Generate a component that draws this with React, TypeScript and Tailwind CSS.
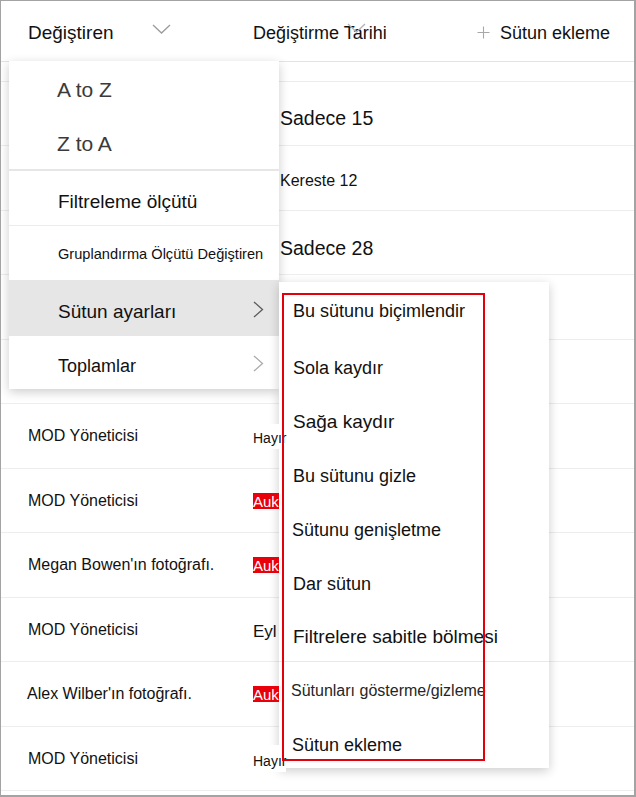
import React from "react";

type Row = {
  h: string;
  name?: string;
  namePad?: string;
  val?: React.ReactNode;
};

function Auk() {
  return (
    <span className="relative z-20 inline-block w-[26px] overflow-hidden whitespace-nowrap bg-[#e8000b] pt-[1px] text-[15px] leading-[15px] text-white">
      Auk
    </span>
  );
}

const rows: Row[] = [
  {
    h: "h-[64px]",
    val: <span className="bg-white pl-[27px] pt-[10px] text-[19.5px]">Sadece 15</span>,
  },
  {
    h: "h-[65px]",
    val: <span className="bg-white pl-[27px] pt-[5px] text-[16px]">Kereste 12</span>,
  },
  {
    h: "h-[64px]",
    val: <span className="bg-white pl-[27px] pt-[12px] text-[19.5px]">Sadece 28</span>,
  },
  { h: "h-[65px]" },
  { h: "h-[64px]" },
  {
    h: "h-[65px]",
    name: "MOD Yöneticisi",
    val: <span className="relative z-20 bg-white pt-[4px] text-[14px]">Hayır</span>,
  },
  { h: "h-[64px]", name: "MOD Yöneticisi", val: <Auk /> },
  { h: "h-[65px]", name: "Megan Bowen'ın fotoğrafı.", val: <Auk /> },
  {
    h: "h-[64px]",
    name: "MOD Yöneticisi",
    val: <span className="w-[26px] bg-white pt-[4px] text-[17px]">Eyl</span>,
  },
  { h: "h-[65px]", name: "Alex Wilber'ın fotoğrafı.", namePad: "pl-[26px]", val: <Auk /> },
  {
    h: "h-[64px]",
    name: "MOD Yöneticisi",
    val: <span className="relative z-20 bg-white pt-[6px] text-[14px]">Hayır</span>,
  },
];

function ChevronDown({ className, color }: { className?: string; color: string }) {
  return (
    <svg className={className} width="19" height="10" viewBox="0 0 19 10" fill="none">
      <polyline points="1,1 9.5,9 18,1" stroke={color} strokeWidth="1.3" />
    </svg>
  );
}

function ChevronRight({ color }: { color: string }) {
  return (
    <svg width="11" height="17" viewBox="0 0 11 17" fill="none">
      <polyline points="1,1 9.5,8.5 1,16" stroke={color} strokeWidth="1.3" />
    </svg>
  );
}

function SortMenu() {
  return (
    <div className="absolute left-[8px] top-[60px] z-10 w-[270px] bg-white shadow-[0_3px_10px_rgba(0,0,0,0.2)]">
      <div className="flex h-[54px] items-center pl-[48px] pt-[4px] text-[21px] text-[#3a3a3a]">A to Z</div>
      <div className="flex h-[54px] items-center pl-[48px] pt-[4px] text-[21px] text-[#3a3a3a]">Z to A</div>
      <div className="h-[2px] bg-[#e6e6e6]" />
      <div className="flex h-[54px] items-center pl-[49px] pt-[8px] text-[19px]">Filtreleme ölçütü</div>
      <div className="h-px bg-[#ececec]" />
      <div className="flex h-[54px] items-center pl-[49px] pt-[3px] text-[14.6px]">
        Gruplandırma Ölçütü Değiştiren
      </div>
      <div className="flex h-[56px] items-center justify-between bg-[#e6e6e6] pl-[49px] pr-[15px] pt-[8px] text-[19px]">
        <span>Sütun ayarları</span>
        <span className="mb-[6px] flex">
          <ChevronRight color="#5a5a5a" />
        </span>
      </div>
      <div className="flex h-[53px] items-center justify-between pl-[49px] pr-[15px] pt-[8px] text-[18px]">
        <span>Toplamlar</span>
        <span className="mb-[6px] flex">
          <ChevronRight color="#ababab" />
        </span>
      </div>
    </div>
  );
}

const subItems: { h: string; size: string; pad: string; label: string }[] = [
  { h: "h-[56px]", size: "text-[18px]", pad: "pl-[14px] pt-[2px]", label: "Bu sütunu biçimlendir" },
  { h: "h-[57px]", size: "text-[18px]", pad: "pl-[14px] pt-[4px]", label: "Sola kaydır" },
  { h: "h-[52px]", size: "text-[19px]", pad: "pl-[14px] pt-[2px]", label: "Sağa kaydır" },
  { h: "h-[55px]", size: "text-[18px]", pad: "pl-[14px] pt-[4px]", label: "Bu sütunu gizle" },
  { h: "h-[53px]", size: "text-[18px]", pad: "pl-[13px] pt-[3px]", label: "Sütunu genişletme" },
  { h: "h-[54px]", size: "text-[18px]", pad: "pl-[14px] pt-[4px]", label: "Dar sütun" },
  { h: "h-[52px]", size: "text-[19px]", pad: "pl-[14px] pt-[5px]", label: "Filtrelere sabitle bölmesi" },
];

function ColumnSettingsMenu() {
  return (
    <div className="absolute left-[278px] top-[281px] z-10 flex h-[486px] w-[270px] flex-col bg-white shadow-[0_3px_10px_rgba(0,0,0,0.2)]">
      {subItems.map((it) => (
        <div key={it.label} className={`flex items-center ${it.h} ${it.pad} ${it.size}`}>
          {it.label}
        </div>
      ))}
      <div className="h-px bg-[#e8e8e8]" />
      <div className="flex h-[56px] items-center pl-[12px] pt-[1px] text-[16px] text-[#262626]">
        Sütunları gösterme/gizleme
      </div>
      <div className="flex h-[50px] items-center pl-[13px] pt-[4px] text-[18px]">Sütun ekleme</div>
    </div>
  );
}

export default function App() {
  return (
    <div className="relative h-[797px] w-[636px] overflow-hidden border-b-2 border-l border-r-2 border-t border-[#a3a3a3] bg-white font-['Liberation_Sans',Arial,sans-serif] text-[#111]">
      {/* column headers */}
      <div className="flex h-[61px] border-b border-[#e4e4e4]">
        <div className="flex w-[252px] items-center pl-[27px] pt-[5px] text-[19px]">
          <span>Değiştiren</span>
          <ChevronDown className="mb-[10px] ml-[38px]" color="#9c9c9c" />
        </div>
        <div className="relative flex w-[224px] items-center pt-[5px] text-[18px]">
          <span>Değiştirme Tarihi</span>
          <ChevronDown className="absolute left-[94px] top-[22px]" color="#b4b4b4" />
        </div>
        <div className="flex items-center pt-[5px] text-[18px]">
          <svg className="mb-[3px]" width="13" height="13" viewBox="0 0 13 13" fill="none">
            <path d="M6.5 0.5v12M0.5 6.5h12" stroke="#a8a8a8" strokeWidth="1.1" />
          </svg>
          <span className="ml-[10px]">Sütun ekleme</span>
        </div>
      </div>
      <div className="h-[20px] border-b border-[#ececec]" />

      {/* list rows */}
      {rows.map((r, i) => (
        <div key={i} className={`flex border-b border-[#ededed] ${r.h}`}>
          <div className={`flex w-[252px] items-center text-[16px] ${r.namePad ?? "pl-[27px]"}`}>{r.name}</div>
          <div className="flex items-center">{r.val}</div>
        </div>
      ))}

      <SortMenu />
      <ColumnSettingsMenu />

      {/* highlight frame around the column settings list */}
      <div className="pointer-events-none absolute left-[281px] top-[292px] z-30 h-[468px] w-[203px] border-2 border-[#e4000b]" />
    </div>
  );
}
